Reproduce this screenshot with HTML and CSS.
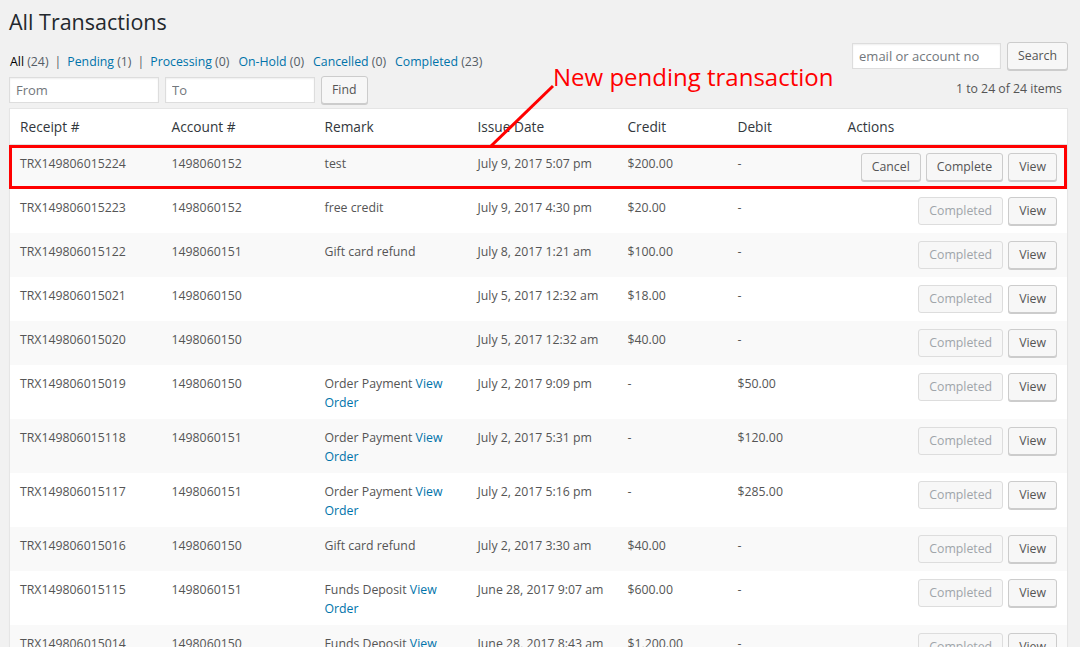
FILE: index.html
```html
<!DOCTYPE html>
<html lang="en">
<head>
    <title>All Transactions</title>
    <link rel="stylesheet" href="styles.css">
</head>
<body>
    <div class="wrap">
        <h1>All Transactions</h1>

        <div class="tablenav">
            <div class="nav-left">
                <ul class="subsubsub">
                    <li><a class="current" href="#">All <span class="count">(24)</span></a><span class="sep">|</span></li>
                    <li><a href="#">Pending <span class="count">(1)</span></a><span class="sep">|</span></li>
                    <li class="plain"><a href="#">Processing <span class="count">(0)</span></a></li>
                    <li class="plain"><a href="#">On-Hold <span class="count">(0)</span></a></li>
                    <li class="plain"><a href="#">Cancelled <span class="count">(0)</span></a></li>
                    <li><a href="#">Completed <span class="count">(23)</span></a></li>
                </ul>
                <div class="date-filter">
                    <input type="text" placeholder="From">
                    <input type="text" placeholder="To">
                    <button class="button">Find</button>
                </div>
            </div>
            <div class="nav-right">
                <div class="search-box">
                    <input type="search" placeholder="email or account no">
                    <button class="button">Search</button>
                </div>
                <div class="displaying-num">1 to 24 of 24 items</div>
            </div>
        </div>

        <div class="table-wrap">
            <table class="transactions">
                <colgroup>
                    <col style="width:152px">
                    <col style="width:153px">
                    <col style="width:153px">
                    <col style="width:150px">
                    <col style="width:110px">
                    <col style="width:110px">
                    <col>
                </colgroup>
                <thead>
                    <tr>
                        <th>Receipt #</th>
                        <th>Account #</th>
                        <th>Remark</th>
                        <th>Issue Date</th>
                        <th>Credit</th>
                        <th>Debit</th>
                        <th>Actions</th>
                    </tr>
                </thead>
                <tbody>
                    <tr>
                        <td>TRX149806015224</td>
                        <td>1498060152</td>
                        <td>test</td>
                        <td>July 9, 2017 5:07 pm</td>
                        <td>$200.00</td>
                        <td>-</td>
                        <td class="actions"><div class="row-actions"><button class="button">Cancel</button><button class="button">Complete</button><button class="button">View</button></div></td>
                    </tr>
                    <tr>
                        <td>TRX149806015223</td>
                        <td>1498060152</td>
                        <td>free credit</td>
                        <td>July 9, 2017 4:30 pm</td>
                        <td>$20.00</td>
                        <td>-</td>
                        <td class="actions"><div class="row-actions"><button class="button" disabled>Completed</button><button class="button">View</button></div></td>
                    </tr>
                    <tr>
                        <td>TRX149806015122</td>
                        <td>1498060151</td>
                        <td>Gift card refund</td>
                        <td>July 8, 2017 1:21 am</td>
                        <td>$100.00</td>
                        <td>-</td>
                        <td class="actions"><div class="row-actions"><button class="button" disabled>Completed</button><button class="button">View</button></div></td>
                    </tr>
                    <tr>
                        <td>TRX149806015021</td>
                        <td>1498060150</td>
                        <td></td>
                        <td>July 5, 2017 12:32 am</td>
                        <td>$18.00</td>
                        <td>-</td>
                        <td class="actions"><div class="row-actions"><button class="button" disabled>Completed</button><button class="button">View</button></div></td>
                    </tr>
                    <tr>
                        <td>TRX149806015020</td>
                        <td>1498060150</td>
                        <td></td>
                        <td>July 5, 2017 12:32 am</td>
                        <td>$40.00</td>
                        <td>-</td>
                        <td class="actions"><div class="row-actions"><button class="button" disabled>Completed</button><button class="button">View</button></div></td>
                    </tr>
                    <tr>
                        <td>TRX149806015019</td>
                        <td>1498060150</td>
                        <td>Order Payment <a href="#">View Order</a></td>
                        <td>July 2, 2017 9:09 pm</td>
                        <td>-</td>
                        <td>$50.00</td>
                        <td class="actions"><div class="row-actions"><button class="button" disabled>Completed</button><button class="button">View</button></div></td>
                    </tr>
                    <tr>
                        <td>TRX149806015118</td>
                        <td>1498060151</td>
                        <td>Order Payment <a href="#">View Order</a></td>
                        <td>July 2, 2017 5:31 pm</td>
                        <td>-</td>
                        <td>$120.00</td>
                        <td class="actions"><div class="row-actions"><button class="button" disabled>Completed</button><button class="button">View</button></div></td>
                    </tr>
                    <tr>
                        <td>TRX149806015117</td>
                        <td>1498060151</td>
                        <td>Order Payment <a href="#">View Order</a></td>
                        <td>July 2, 2017 5:16 pm</td>
                        <td>-</td>
                        <td>$285.00</td>
                        <td class="actions"><div class="row-actions"><button class="button" disabled>Completed</button><button class="button">View</button></div></td>
                    </tr>
                    <tr>
                        <td>TRX149806015016</td>
                        <td>1498060150</td>
                        <td>Gift card refund</td>
                        <td>July 2, 2017 3:30 am</td>
                        <td>$40.00</td>
                        <td>-</td>
                        <td class="actions"><div class="row-actions"><button class="button" disabled>Completed</button><button class="button">View</button></div></td>
                    </tr>
                    <tr>
                        <td>TRX149806015115</td>
                        <td>1498060151</td>
                        <td>Funds Deposit <a href="#">View Order</a></td>
                        <td>June 28, 2017 9:07 am</td>
                        <td>$600.00</td>
                        <td>-</td>
                        <td class="actions"><div class="row-actions"><button class="button" disabled>Completed</button><button class="button">View</button></div></td>
                    </tr>
                    <tr>
                        <td>TRX149806015014</td>
                        <td>1498060150</td>
                        <td>Funds Deposit <a href="#">View Order</a></td>
                        <td>June 28, 2017 8:43 am</td>
                        <td>$1,200.00</td>
                        <td>-</td>
                        <td class="actions"><div class="row-actions"><button class="button" disabled>Completed</button><button class="button">View</button></div></td>
                    </tr>
                </tbody>
            </table>
            <div class="highlight"></div>
        </div>

        <!-- screenshot annotation -->
        <svg class="pointer" width="90" height="75" viewBox="0 0 90 75">
            <line x1="73" y1="6" x2="10" y2="67" stroke="#ff0000" stroke-width="3"/>
        </svg>
        <div class="note">New pending transaction</div>
    </div>
</body>
</html>
```

FILE: styles.css
```css
body {
    margin: 0;
    background: #f1f1f1;
    color: #444;
    font-family: 'Open Sans', 'Noto Sans', sans-serif;
    font-size: 12.3px;
    line-height: 19px;
}
a {
    color: #0073aa;
    text-decoration: none;
}
.wrap {
    position: relative;
    margin: 0 12px 0 9px;
}
h1 {
    margin: 0;
    padding: 7px 0 4px;
    font-size: 21.5px;
    font-weight: 400;
    line-height: 29px;
    color: #23282d;
}

/* top bar: filters on the left, search on the right */
.tablenav {
    display: flex;
    justify-content: space-between;
    align-items: flex-start;
    margin-top: 2px;
}
.subsubsub {
    display: flex;
    list-style: none;
    margin: 10px 0 0 1px;
    padding: 0;
}
.subsubsub li {
    display: flex;
}
.subsubsub li.plain {
    margin-right: 9px;
}
.subsubsub .current {
    color: #000;
}
.subsubsub .count {
    color: #555d66;
}
.subsubsub .sep {
    margin: 0 6px;
    color: #555d66;
}
.date-filter {
    display: flex;
    align-items: center;
    gap: 6px;
    margin-top: 5px;
}
input {
    box-sizing: border-box;
    height: 26px;
    margin: 0;
    padding: 0 6px;
    border: 1px solid #ddd;
    background: #fff;
    box-shadow: inset 0 1px 2px rgba(0, 0, 0, 0.07);
    font-family: inherit;
    font-size: 13px;
    color: #32373c;
    outline: none;
}
input::placeholder {
    color: #72777c;
}
.date-filter input {
    width: 150px;
}
.search-box {
    display: flex;
    align-items: center;
    gap: 6px;
}
.search-box input {
    width: 149px;
}
.displaying-num {
    margin-top: 9px;
    padding-right: 6px;
    text-align: right;
    color: #555;
}

.button {
    box-sizing: border-box;
    height: 28px;
    margin: 0;
    padding: 0 10px 1px;
    border: 1px solid #ccc;
    border-radius: 3px;
    background: #f7f7f7;
    box-shadow: 0 1px 0 #ccc;
    font-family: inherit;
    font-size: 12.3px;
    line-height: 26px;
    color: #555;
    cursor: pointer;
    white-space: nowrap;
}
.button:disabled {
    color: #a0a5aa;
    border-color: #ddd;
    box-shadow: none;
    cursor: default;
}

/* table */
.table-wrap {
    position: relative;
    margin-top: 4px;
}
.transactions {
    width: 100%;
    table-layout: fixed;
    border-collapse: collapse;
    border: 1px solid #e5e5e5;
    background: #fff;
    box-shadow: 0 1px 1px rgba(0, 0, 0, 0.04);
}
.transactions th {
    padding: 8px 10px;
    border-bottom: 1px solid #e1e1e1;
    font-size: 13.7px;
    font-weight: 400;
    line-height: 19px;
    text-align: left;
    color: #32373c;
}
.transactions td {
    padding: 9px 10px 7px;
    vertical-align: top;
    color: #555;
}
.transactions td.actions {
    padding: 8px 10px;
}
.transactions tbody tr:nth-child(odd) {
    background: #f9f9f9;
}
.row-actions {
    display: flex;
    justify-content: flex-end;
    gap: 5px;
}

/* annotation drawn over the screenshot */
.highlight {
    position: absolute;
    left: 0;
    top: 37px;
    width: 1058px;
    height: 44px;
    box-sizing: border-box;
    border: 3px solid #ff0000;
}
.pointer {
    position: absolute;
    left: 471px;
    top: 80px;
}
.note {
    position: absolute;
    left: 544px;
    top: 62px;
    font-size: 24px;
    line-height: 30px;
    color: #ff0000;
    white-space: nowrap;
}
```
